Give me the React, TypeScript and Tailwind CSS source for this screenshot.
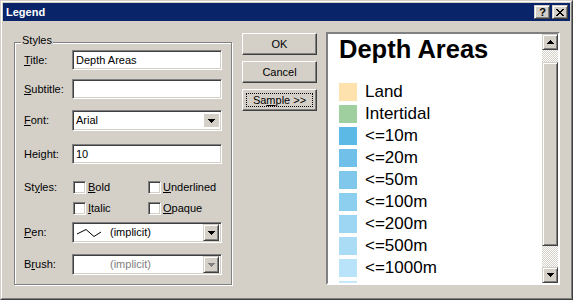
const ui = "font-['Liberation_Sans',Arial,sans-serif] text-[11px] leading-[13px] text-black";
const sunken =
  "border border-t-[#808080] border-l-[#808080] border-r-white border-b-white shadow-[inset_1px_1px_0_#404040,inset_-1px_-1px_0_#d4d0c8]";
const raised =
  "border border-t-[#d4d0c8] border-l-[#d4d0c8] border-r-[#404040] border-b-[#404040] shadow-[inset_1px_1px_0_#fff,inset_-1px_-1px_0_#808080]";
const push =
  "border border-t-white border-l-white border-r-[#404040] border-b-[#404040] shadow-[inset_-1px_-1px_0_#808080]";
const checker =
  "bg-[repeating-conic-gradient(#d4d0c8_0_25%,#fff_0_50%)] bg-[length:2px_2px]";

const legend = [
  { label: "Land", color: "#fde2ae" },
  { label: "Intertidal", color: "#9fcf9f" },
  { label: "<=10m", color: "#5cb8e4" },
  { label: "<=20m", color: "#70c0e9" },
  { label: "<=50m", color: "#7fc8ec" },
  { label: "<=100m", color: "#8dcfef" },
  { label: "<=200m", color: "#9cd6f3" },
  { label: "<=500m", color: "#aadcf6" },
  { label: "<=1000m", color: "#b9e3f9" },
  { label: "<=2000m", color: "#c6e9fb" },
];

function Arrow({ up = false, disabled = false }: { up?: boolean; disabled?: boolean }) {
  return (
    <svg width="7" height="4" viewBox="0 0 7 4" className={up ? "rotate-180" : ""}>
      <path d="M0 0h7v1H0zM1 1h5v1H1zM2 2h3v1H2zM3 3h1v1H3z" fill={disabled ? "#808080" : "#000"} />
    </svg>
  );
}

function Label({ text, mn, rest }: { text: string; mn: string; rest: string }) {
  return (
    <span className="w-[48px] shrink-0">
      {text}
      <u>{mn}</u>
      {rest}
    </span>
  );
}

function Check({ mn, rest }: { mn: string; rest: string }) {
  return (
    <div className="w-[75px] flex items-center">
      <div className={`w-[13px] h-[13px] bg-white ${sunken}`} />
      <span className="ml-[2px]">
        <u>{mn}</u>
        {rest}
      </span>
    </div>
  );
}

export default function App() {
  return (
    <div className={`w-[573px] h-[300px] bg-[#d4d0c8] border border-t-[#d4d0c8] border-l-[#d4d0c8] border-r-[#404040] border-b-[#404040] ${ui}`}>
      <div className="h-full border border-t-white border-l-white border-r-[#808080] border-b-[#808080] p-[1px] flex flex-col">
        {/* title bar */}
        <div className="h-[18px] bg-[#0a246a] flex items-center pl-[3px] shrink-0">
          <span className="text-white font-bold">Legend</span>
          <div className="ml-auto flex gap-[2px] mr-[2px]">
            <div className={`w-[16px] h-[14px] bg-[#d4d0c8] flex items-center justify-center ${raised}`}>
              <span className="font-bold text-[11px] leading-[11px] ml-[1px]">?</span>
            </div>
            <div className={`w-[16px] h-[14px] bg-[#d4d0c8] flex items-center justify-center ${raised}`}>
              <svg width="8" height="7" viewBox="0 0 8 7">
                <path
                  d="M0 0h2v1H0zM6 0h2v1H6zM1 1h2v1H1zM5 1h2v1H5zM2 2h4v1H2zM3 3h2v1H3zM2 4h4v1H2zM1 5h2v1H1zM5 5h2v1H5zM0 6h2v1H0zM6 6h2v1H6z"
                  fill="#000"
                />
              </svg>
            </div>
          </div>
        </div>

        {/* body */}
        <div className="flex items-start">
          {/* Styles group */}
          <div className="relative ml-[11px] mt-[21px] w-[218px] h-[243px] shrink-0 border border-[#808080] shadow-[inset_1px_1px_0_#fff,1px_1px_0_#fff]">
            <span className="absolute left-[6px] top-[-9px] bg-[#d4d0c8] px-[1px]">Styles</span>
            <div className="flex flex-col pl-[9px] pt-[7px]">
              <div className="flex items-center h-[20px]">
                <Label text="" mn="T" rest="itle:" />
                <div className={`w-[150px] h-[20px] bg-white pl-[3px] flex items-center ${sunken}`}>Depth Areas</div>
              </div>
              <div className="flex items-center h-[20px] mt-[9px]">
                <Label text="" mn="S" rest="ubtitle:" />
                <div className={`w-[150px] h-[20px] bg-white ${sunken}`} />
              </div>
              <div className="flex items-center h-[21px] mt-[11px]">
                <Label text="" mn="F" rest="ont:" />
                <div className={`w-[150px] h-[21px] bg-white pl-[3px] pr-[2px] flex items-center ${sunken}`}>
                  <span>Arial</span>
                  <div className="ml-auto w-[15px] h-[13px] bg-[#d4d0c8] flex items-center justify-center">
                    <Arrow />
                  </div>
                </div>
              </div>
              <div className="flex items-center h-[20px] mt-[13px]">
                <Label text="Hei" mn="g" rest="ht:" />
                <div className={`w-[150px] h-[20px] bg-white pl-[3px] flex items-center ${sunken}`}>10</div>
              </div>
              <div className="flex items-center h-[13px] mt-[17px]">
                <Label text="St" mn="y" rest="les:" />
                <div className="ml-[1px] flex">
                  <Check mn="B" rest="old" />
                  <Check mn="U" rest="nderlined" />
                </div>
              </div>
              <div className="flex items-center h-[13px] mt-[8px]">
                <span className="w-[48px] shrink-0" />
                <div className="ml-[1px] flex">
                  <Check mn="I" rest="talic" />
                  <Check mn="O" rest="paque" />
                </div>
              </div>
              <div className="flex items-center h-[21px] mt-[7px]">
                <Label text="" mn="P" rest="en:" />
                <div className={`w-[150px] h-[21px] bg-white pl-[3px] pr-[2px] flex items-center ${sunken}`}>
                  <svg width="24" height="10" viewBox="0 0 24 10" className="ml-[1px]">
                    <polyline points="0,6 9,1.5 17,8.5 24,4" fill="none" stroke="#000" strokeWidth="1" />
                  </svg>
                  <span className="ml-[9px]">(implicit)</span>
                  <div className={`ml-auto w-[16px] h-[17px] bg-[#d4d0c8] flex items-center justify-center ${raised}`}>
                    <Arrow />
                  </div>
                </div>
              </div>
              <div className="flex items-center h-[21px] mt-[11px]">
                <Label text="B" mn="r" rest="ush:" />
                <div className={`w-[150px] h-[21px] bg-white pl-[3px] pr-[2px] flex items-center ${sunken}`}>
                  <span className="ml-[34px] text-[#808080]">(implicit)</span>
                  <div className={`ml-auto w-[16px] h-[17px] bg-[#d4d0c8] flex items-center justify-center ${raised}`}>
                    <Arrow disabled />
                  </div>
                </div>
              </div>
            </div>
          </div>

          {/* buttons */}
          <div className="ml-[10px] mt-[12px] flex flex-col gap-[6px] shrink-0">
            <div className={`w-[75px] h-[22px] flex items-center justify-center ${push}`}>OK</div>
            <div className={`w-[75px] h-[22px] flex items-center justify-center ${push}`}>Cancel</div>
            <div className={`w-[75px] h-[22px] p-[3px] flex ${push}`}>
              <div className="flex-1 border border-dotted border-black flex items-center justify-center">
                <span>
                  Sa<u>m</u>ple &gt;&gt;
                </span>
              </div>
            </div>
          </div>

          {/* preview */}
          <div className={`ml-[9px] mt-[11px] w-[234px] h-[253px] shrink-0 bg-white flex ${sunken} border-[2px] shadow-none`}>
            <div className="flex-1 overflow-hidden pl-[11px] pt-[3px] font-['Liberation_Sans',Arial,sans-serif]">
              <div className="font-bold text-[25.5px] leading-[25px]">Depth Areas</div>
              <div className="mt-[19px] flex flex-col">
                {legend.map((item) => (
                  <div key={item.label} className="flex items-center h-[22px] shrink-0">
                    <div className="w-[18px] h-[18px] shrink-0" style={{ backgroundColor: item.color }} />
                    <span className="ml-[8px] text-[17px] leading-[22px]">{item.label}</span>
                  </div>
                ))}
              </div>
            </div>
            <div className="w-[16px] flex flex-col shrink-0">
              <div className={`h-[16px] bg-[#d4d0c8] flex items-center justify-center ${raised}`}>
                <Arrow up />
              </div>
              <div className={`h-[12px] ${checker}`} />
              <div className={`h-[184px] bg-[#d4d0c8] ${raised}`} />
              <div className={`flex-1 ${checker}`} />
              <div className={`h-[16px] bg-[#d4d0c8] flex items-center justify-center ${raised}`}>
                <Arrow />
              </div>
            </div>
          </div>
        </div>
      </div>
    </div>
  );
}
